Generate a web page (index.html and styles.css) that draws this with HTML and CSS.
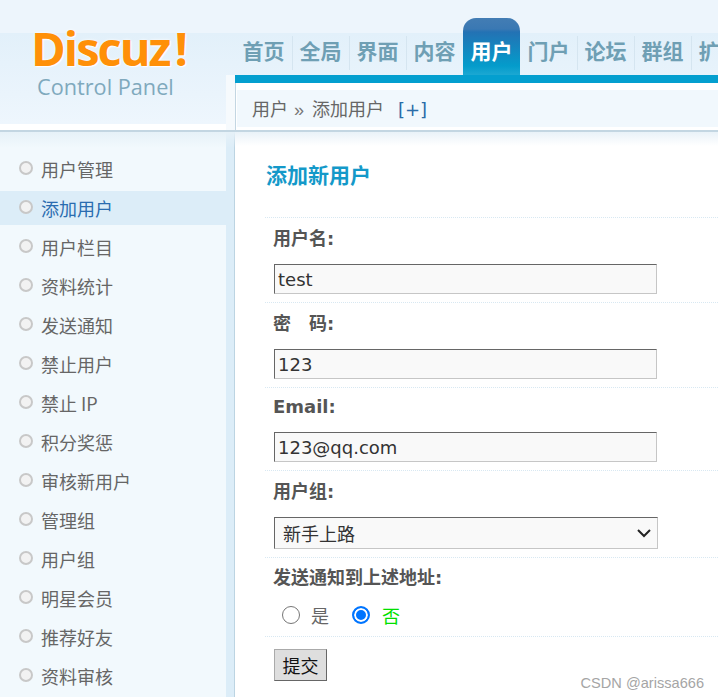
FILE: index.html
```html
<!DOCTYPE html>
<html lang="zh">
<head>
<meta charset="utf-8">
<title>Discuz! Control Panel</title>
<link rel="stylesheet" href="styles.css">
</head>
<body>
<div class="page">
  <header class="top">
    <div class="logo">
      <div class="brand">Discuz<span class="bang">!</span></div>
      <div class="sub">Control Panel</div>
    </div>
    <div class="logo-gap"></div>
    <div class="head-right">
      <nav class="tabs">
        <a class="tab">首页</a><a class="tab">全局</a><a class="tab">界面</a><a class="tab">内容</a><a class="tab on">用户</a><a class="tab">门户</a><a class="tab">论坛</a><a class="tab">群组</a><a class="tab">扩展</a>
      </nav>
      <div class="crumb-wrap"><div class="crumb"><span>用户</span><span class="sep">»</span><span>添加用户</span><span class="plus">[+]</span></div></div>
    </div>
  </header>
  <div class="body">
    <aside class="side">
      <ul class="menu">
        <li>用户管理</li>
        <li class="cur">添加用户</li>
        <li>用户栏目</li>
        <li>资料统计</li>
        <li>发送通知</li>
        <li>禁止用户</li>
        <li>禁止 IP</li>
        <li>积分奖惩</li>
        <li>审核新用户</li>
        <li>管理组</li>
        <li>用户组</li>
        <li>明星会员</li>
        <li>推荐好友</li>
        <li>资料审核</li>
      </ul>
    </aside>
    <main class="main">
      <h3 class="title">添加新用户</h3>
      <form class="form">
        <div class="row r1">
          <div class="lab">用户名:</div>
          <input class="txt" type="text" value="test">
        </div>
        <div class="row r2">
          <div class="lab">密&emsp;码:</div>
          <input class="txt" type="text" value="123">
        </div>
        <div class="row r3">
          <div class="lab">Email:</div>
          <input class="txt" type="text" value="123@qq.com">
        </div>
        <div class="row r4">
          <div class="lab">用户组:</div>
          <div class="sel"><span>新手上路</span>
            <svg class="chev" width="16" height="10" viewBox="0 0 16 10"><path d="M2 2l6 6 6-6" fill="none" stroke="#222" stroke-width="2"/></svg>
          </div>
        </div>
        <div class="row r5">
          <div class="lab">发送通知到上述地址:</div>
          <div class="radios">
            <span class="radio"></span><span class="rt">是</span>
            <span class="radio checked"></span><span class="rt green">否</span>
          </div>
        </div>
        <div class="row r6"><button class="btn" type="button">提交</button></div>
      </form>
      <div class="mark">CSDN @arissa666</div>
    </main>
  </div>
</div>
</body>
</html>
```

FILE: styles.css
```css
* { box-sizing: border-box; }
html, body { margin: 0; padding: 0; }
body {
  width: 718px;
  height: 697px;
  overflow: hidden;
  background: #fff;
  color: #555;
  font-family: "DejaVu Sans", "Noto Sans CJK SC", sans-serif;
  font-size: 18px;
}
.page { width: 718px; height: 697px; overflow: hidden; position: relative; }
.top {
  display: flex;
  height: 132px;
  background: linear-gradient(#edf5fc 0, #edf5fc 33px, #e2f0fa 33px, #eef6fd 124px, #fff 124px, #fff 130px);
  border-bottom: 2px solid #c3d6e2;
}
.logo { width: 226px; flex: none; padding: 23px 0 0 31px; }
.logo-gap { width: 9px; flex: none; margin-top: 75px; background: #f6fafd; }
.brand {
  font-family: "Open Sans", "Liberation Sans", sans-serif;
  font-weight: 700;
  font-size: 47px;
  line-height: 50px;
  height: 50px;
  color: #ff9008;
  letter-spacing: -2px;
  text-shadow: 0 0 3px #fff, 1px 1px 1px #fff;
}
.bang { margin-left: 5px; }
.sub {
  font-family: "Open Sans", "Liberation Sans", sans-serif;
  font-size: 21.7px;
  line-height: 28px;
  color: #7fa9bd;
  margin: 0 0 0 6px;
}
.head-right { flex: 1; min-width: 0; display: flex; flex-direction: column; }
.tabs {
  height: 83px;
  padding: 18px 0 0 0;
  display: flex;
  flex-wrap: nowrap;
  border-bottom: 8px solid #049fcf;
  overflow: hidden;
}
.tab {
  flex: none;
  width: 57px;
  height: 57px;
  padding-top: 16px;
  text-align: center;
  font-family: "Noto Sans CJK SC", sans-serif;
  font-weight: 700;
  font-size: 21px;
  line-height: 32px;
  color: #6f9fb4;
  position: relative;
}
.tab + .tab::before {
  content: "";
  position: absolute;
  left: 0;
  top: 18px;
  height: 34px;
  width: 1px;
  background: #d5e5f0;
}
.tab.on {
  color: #fff;
  background: linear-gradient(#437db4 0, #3a78b3 11px, #2372b4 14px, #049ccb 48px, #32b2d9 65px);
  border-radius: 13px 13px 0 0;
  height: 65px;
}
.tab.on::before, .tab.on + .tab::before { display: none; }
.crumb-wrap {
  flex: 1;
  background: #fff;
  padding: 7px 0 0 1px;
  border-left: 1px solid #c3d6e2;
}
.crumb {
  height: 37px;
  background: #f1f8fd;
  padding-left: 15px;
  font-family: "Noto Sans CJK SC", sans-serif;
  font-size: 18px;
  line-height: 37px;
  color: #666;
  white-space: nowrap;
}
.sep { font-family: "Liberation Sans", sans-serif; font-size: 18px; color: #777; margin: 0 8px 0 6px; }
.plus { font-family: "DejaVu Sans", sans-serif; margin-left: 14px; color: #2a6ca8; }
.body { display: flex; height: 565px; }
.side {
  width: 235px;
  flex: none;
  background:
    linear-gradient(#e6f1f8 0, rgba(242, 249, 253, 0) 16px),
    linear-gradient(90deg, #f2f9fd 0, #f2f9fd 226px, #dcedf8 226px, #dcedf8 234px, #bcd4e2 234px);
  padding-top: 20px;
}
.menu { list-style: none; margin: 0; padding: 0; width: 226px; }
.menu li {
  height: 34px;
  margin-bottom: 5px;
  padding: 0 0 0 41px;
  line-height: 34px;
  font-family: "Noto Sans CJK SC", sans-serif;
  font-size: 18px;
  color: #666;
  position: relative;
}
.menu li::before {
  content: "";
  position: absolute;
  left: 19px;
  top: 9px;
  width: 10px;
  height: 10px;
  border-radius: 50%;
  background: #f2f2f2;
  border: 2px solid #c8c8c8;
}
.menu li.cur { background: #dcedf8; color: #2a6cb0; }
.main {
  flex: 1;
  min-width: 0;
  position: relative;
  background: linear-gradient(#e9f2f8 0, #fff 14px);
  padding: 26px 0 0 30px;
}
.title {
  margin: 0 0 0 1px;
  font-family: "Noto Sans CJK SC", sans-serif;
  font-size: 21px;
  line-height: 32px;
  height: 59px;
  font-weight: 700;
  color: #1499c9;
}
.row { border-top: 1px dotted #d8e8f2; padding-left: 9px; }
.lab {
  font-family: "DejaVu Sans", "Noto Sans CJK SC", sans-serif;
  font-weight: 700;
  font-size: 18px;
  line-height: 24px;
  color: #555;
  margin-left: -1px;
  padding-top: 9px;
  height: 46px;
}
.txt {
  display: block;
  width: 383px;
  height: 30px;
  padding: 1px 3px 0;
  margin: 0;
  background: #f9f9f9;
  border: 1px solid;
  border-color: #666 #c6c6c6 #c6c6c6 #666;
  border-radius: 0;
  outline: none;
  font-family: "DejaVu Sans", sans-serif;
  font-size: 18px;
  color: #333;
}
.r1 { height: 85px; }
.r2 { height: 85px; }
.r3 { height: 83px; }
.r3 .lab { height: 44px; padding-top: 7px; }
.r4 { height: 87px; }
.sel {
  width: 384px;
  height: 32px;
  background: #f9f9f9;
  border: 1px solid;
  border-color: #666 #c6c6c6 #c6c6c6 #666;
  padding-left: 8px;
  display: flex;
  align-items: center;
  justify-content: space-between;
  padding-right: 5px;
  font-family: "Noto Sans CJK SC", sans-serif;
  font-size: 18px;
  color: #333;
}
.r5 { height: 79px; }
.r5 .lab { padding-top: 8px; height: 38px; }
.radios { display: flex; align-items: center; height: 38px; padding-left: 8px; }
.radio {
  width: 18px;
  height: 18px;
  border-radius: 50%;
  border: 1.5px solid #767676;
  background: #fff;
  flex: none;
}
.radio.checked { border: 2px solid #0075ff; box-shadow: inset 0 0 0 2px #fff; background: #0075ff; margin-left: 23px; }
.rt {
  margin-left: 11px;
  font-family: "Noto Sans CJK SC", sans-serif;
  font-size: 18px;
  color: #666;
}
.rt.green { color: #00e000; margin-left: 12px; }
.r6 { padding-top: 12px; }
.btn {
  display: block;
  width: 53px;
  height: 32px;
  padding: 0;
  background: #dedede;
  border: 1px solid;
  border-color: #aaa #666 #666 #aaa;
  border-radius: 0;
  font-family: "Noto Sans CJK SC", sans-serif;
  font-size: 18px;
  color: #111;
}
.mark {
  position: absolute;
  right: 14px;
  bottom: 6px;
  font-family: "Liberation Sans", sans-serif;
  font-size: 14.6px;
  color: #a5a5a5;
}
```
